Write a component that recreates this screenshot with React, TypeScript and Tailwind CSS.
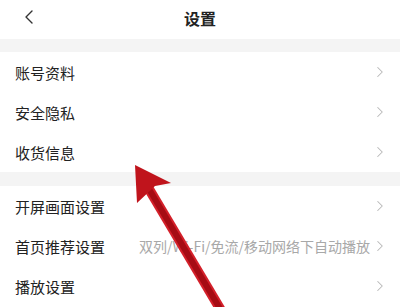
import { ChevronLeft, ChevronRight } from 'lucide-react';

const font = { fontFamily: '"Noto Sans CJK SC", "Noto Sans", sans-serif' };

function Row({ label, hint }: { label: string; hint?: string }) {
  return (
    <div className="flex h-10 items-center justify-between bg-white pl-[15px] pr-[11px]">
      <span className="text-[15px] leading-none text-[#222]">{label}</span>
      <div className="flex items-center gap-[1px]">
        {hint && <span className="text-[14px] leading-none text-[#a8a8a8]">{hint}</span>}
        <ChevronRight size={18} strokeWidth={1.4} className="text-[#b8b8b8]" />
      </div>
    </div>
  );
}

export default function App() {
  return (
    <div className="relative h-[307px] w-[400px] overflow-hidden bg-white" style={font}>
      <div className="relative flex h-[39px] items-center justify-center bg-white pb-1">
        <ChevronLeft size={24} strokeWidth={1.4} className="absolute left-[17px] top-[5px] text-[#333]" />
        <span className="text-[16px] font-bold text-[#222]">设置</span>
      </div>
      <div className="h-[13px] bg-[#f4f4f4]" />
      <Row label="账号资料" />
      <Row label="安全隐私" />
      <Row label="收货信息" />
      <div className="h-[14px] bg-[#f4f4f4]" />
      <Row label="开屏画面设置" />
      <Row label="首页推荐设置" hint="双列/Wi-Fi/免流/移动网络下自动播放" />
      <Row label="播放设置" />

      {/* red annotation arrow */}
      <svg className="absolute inset-0" width="400" height="307" viewBox="0 0 400 307">
        <line x1="146" y1="184" x2="222" y2="312" stroke="#d4202a" strokeWidth="10" />
        <line x1="146" y1="184" x2="222" y2="312" stroke="#a60c14" strokeWidth="6" />
        <polygon points="135,165 171,183 155,186 137,203" fill="#c0141c" />
      </svg>
    </div>
  );
}
